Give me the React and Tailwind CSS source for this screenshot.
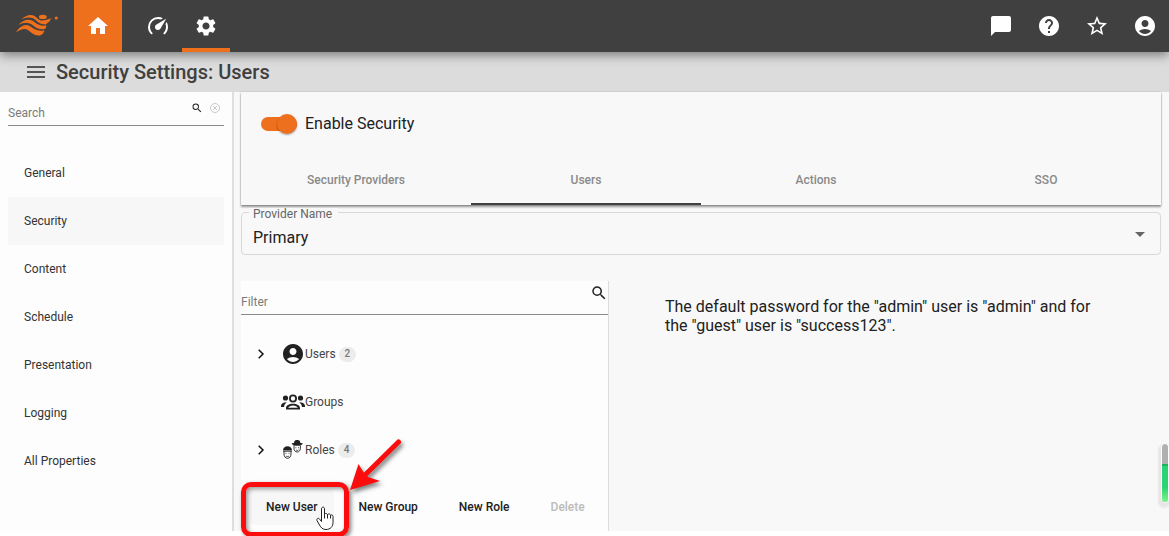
import React, { useState } from "react";
import {
  MdHome, MdSettings, MdChatBubble, MdHelp, MdStarBorder, MdAccountCircle,
  MdSearch, MdMenu, MdArrowDropDown,
} from "react-icons/md";

const sections = ["General", "Security", "Content", "Schedule", "Presentation", "Logging", "All Properties"];
const tabs = ["Security Providers", "Users", "Actions", "SSO"];

function Logo() {
  return (
    <svg viewBox="0 0 44 24" className="h-6 w-11" fill="#ee701d" aria-hidden="true">
      <path d="M5.500 5.500C9 1.500 15 0 18.500 2C21.500 4 22.500 6.500 26 6.500C29 6.500 32 5.500 35.500 4C34 6 33 6.500 34.500 6.800C32.500 8.200 31.500 8.500 30 10.500C26 10.500 22.500 9 19.500 6C16 2.800 11 3 5.500 5.500Z" />
      <path d="M2.500 11C6 6.500 12 4.500 16 6.500C20 8.500 22 12.500 30.500 11.500C30.200 13 30 14 29 15C24 16 20 14 17 11.500C13 8 8 8 2.500 11Z" />
      <path d="M0 18.500C3.500 12.500 9 9.500 13.500 12C18 14.500 20.500 17.500 28.500 16.500C27.500 19 26.500 21.500 22.500 21.500C18 21.500 15.500 18.500 12.500 16.500C9 14 5 15 0 18.500Z" />
      <ellipse cx="26.800" cy="2.900" rx="3.900" ry="2.200" />
      <circle cx="40.300" cy="4" r="1.600" />
    </svg>
  );
}

function Gauge() {
  return (
    <svg viewBox="0 0 24 24" className="size-6" fill="currentColor" aria-hidden="true">
      <path d="M12 16a3 3 0 0 1-3-3c0-1.120.610-2.100 1.500-2.610l9.710-5.620-5.530 9.580c-.500.980-1.510 1.650-2.680 1.650M12 3c1.810 0 3.500.500 4.970 1.320l-2.100 1.210C14 5.190 13 5 12 5a8 8 0 0 0-8 8c0 2.210.890 4.210 2.350 5.650.390.390.390 1.020 0 1.410-.390.390-1.030.390-1.420.010C3.120 18.260 2 15.760 2 13A10 10 0 0 1 12 3m10 10c0 2.760-1.120 5.260-2.930 7.070-.390.380-1.020.380-1.410-.010-.390-.390-.390-1.020 0-1.410C19.110 17.200 20 15.210 20 13c0-1-.190-2-.540-2.900L20.670 8C21.500 9.500 22 11.180 22 13Z" />
    </svg>
  );
}

function GroupsIcon() {
  return (
    <svg viewBox="0 0 24 16" className="h-4 w-6" fill="#212121" aria-hidden="true">
      <path fillRule="evenodd" d="M12 .500a4 4 0 1 1 0 8 4 4 0 0 1 0-8m0 1.800a2.200 2.200 0 1 0 0 4.400 2.200 2.200 0 0 0 0-4.400M5 15.500v-1.500c0-2.500 3-4.300 7-4.300s7 1.800 7 4.300v1.500Zm2.200-1.700h9.600c-.400-1.400-2.400-2.400-4.800-2.400s-4.400 1-4.800 2.400Z" />
      <circle cx="4.500" cy="4" r="2.600" />
      <circle cx="19.500" cy="4" r="2.600" />
      <path d="M0 13v-1.200C0 9.700 2.200 8.400 5.800 8.200 4.300 9.300 3.200 10.800 3 13ZM24 13v-1.200c0-2.100-2.200-3.400-5.800-3.600 1.500 1.100 2.600 2.600 2.800 4.800Z" />
    </svg>
  );
}

function RolesIcon() {
  return (
    <svg viewBox="0 0 22 22" className="size-[22px]" fill="none" stroke="#212121" aria-hidden="true">
      <path d="M2 12v3c0 2.500 1.500 4.300 3.500 4.300S9 17.500 9 15v-3" strokeWidth=".9" />
      <path d="M1 11.500C1 9 2.800 7.200 5.500 7.200S10 9 10 11.500Z" fill="#212121" stroke="none" />
      <path d="M1.200 12.300h8.600" strokeWidth=".8" />
      <path d="M3.500 14.300h1M6.500 14.300h1M4 17c1 .700 2 .700 3 0" strokeWidth=".8" />
      <path d="M12 6.500v2.500c0 2.500 1.300 4 3.200 4s3.200-1.500 3.200-4V6.500" strokeWidth=".9" />
      <path d="M12 4C12.200 1.800 13 .800 15.200 1c2.200-.200 3 .800 3.200 3l2.400.200C20.200 6 18 6.800 15.200 6.800S10.200 6 9.600 4.200Z" fill="#212121" stroke="none" />
      <path d="M13.400 8.700h1M16 8.700h1M14 11c.800.500 1.600.500 2.400 0" strokeWidth=".8" />
    </svg>
  );
}

function TreeRow({ label, icon, count }) {
  return (
    <li className="flex h-12 items-center pl-2 text-xs text-[#444]">
      {count ? (
        <button type="button" aria-label={"Expand " + label} className="flex w-8 pl-1">
          <svg viewBox="0 0 16 16" className="size-4" fill="none" stroke="#111" strokeWidth="1.5" aria-hidden="true"><path d="M5.700 3.700L10 8l-4.300 4.300" /></svg>
        </button>
      ) : (
        <span className="w-8" />
      )}
      <span className="flex w-6 shrink-0 justify-center text-[#212121]">{icon}</span>
      <span>{label}</span>
      {count && (
        <span className="ml-[3px] flex h-[15px] items-center rounded-full bg-[#ececec] px-1.5 text-[10px] font-medium text-[#777]">{count}</span>
      )}
    </li>
  );
}

export default function App() {
  const [enabled, setEnabled] = useState(true);
  return (
    <div className="min-h-screen bg-white font-['Roboto',sans-serif] text-[#212121]">
      <header className="relative z-10 flex h-13 items-stretch bg-[#404040] text-white shadow-[0_3px_10px_rgba(0,0,0,0.45)]">
        <a href="#home" aria-label="Portal" className="flex w-[74px] items-center pl-4"><Logo /></a>
        <nav className="flex flex-1">
          <a href="#start" aria-label="Home" className="flex w-12 items-center justify-center bg-[#ee701d]"><MdHome className="size-6" /></a>
          <a href="#monitor" aria-label="Monitoring" className="ml-3 flex w-12 items-center justify-center"><Gauge /></a>
          <a href="#settings" aria-label="Settings" className="flex w-12 items-center justify-center border-b-4 border-[#ee701d] pt-1"><MdSettings className="size-6" /></a>
        </nav>
        <div className="flex">
          <button type="button" aria-label="Messages" className="flex w-12 items-center justify-center"><MdChatBubble className="size-6" /></button>
          <button type="button" aria-label="Help" className="flex w-12 items-center justify-center"><MdHelp className="size-6" /></button>
          <button type="button" aria-label="Favorites" className="flex w-12 items-center justify-center"><MdStarBorder className="size-6" /></button>
          <button type="button" aria-label="Account" className="flex w-12 items-center justify-center"><MdAccountCircle className="size-6" /></button>
        </div>
      </header>

      <div className="flex h-10 items-center gap-2 bg-[#dcdcdc] pl-6">
        <button type="button" aria-label="Toggle menu" className="text-[#555]"><MdMenu className="size-6" /></button>
        <h1 className="text-xl font-medium text-[#404040]">Security Settings: Users</h1>
      </div>

      <div className="flex items-stretch bg-[#f8f8f8]">
        <aside className="w-[234px] shrink-0 border-r-2 border-[#dedede] bg-[#fdfdfd] pr-2 pl-2">
          <div className="flex h-[34px] items-center border-b border-[#8a8a8a]">
            <input aria-label="Search" placeholder="Search" className="min-w-0 flex-1 pt-2 text-xs outline-none placeholder:text-[#7b7b7b]" />
            <div className="mr-1 mb-0.5 flex items-center gap-[7px]">
              <MdSearch className="size-3 text-[#222]" />
              <button type="button" aria-label="Clear search">
                <svg viewBox="0 0 10 10" className="block size-2.5" fill="none" stroke="#bbb" strokeWidth=".8"><circle cx="5" cy="5" r="4.500" /><path d="M3.200 3.200l3.600 3.600M6.800 3.200L3.200 6.800" /></svg>
              </button>
            </div>
          </div>
          <nav className="mt-[23px] flex flex-col">
            {sections.map((s) => (
              <a key={s} href={"#" + s} className={"flex h-12 items-center px-4 text-xs text-[#333] " + (s === "Security" ? "bg-[#f7f7f7]" : "")}>{s}</a>
            ))}
          </nav>
        </aside>

        <main className="relative min-w-0 flex-1 px-2 pl-[7px]">
          <section className="flex h-[113px] flex-col justify-between shadow-[0_0_1px_rgba(0,0,0,0.35),0_2px_2px_rgba(0,0,0,0.4)]">
            <label className="flex items-center gap-2 pt-5 pl-5">
              <input type="checkbox" role="switch" checked={enabled} onChange={(e) => setEnabled(e.target.checked)} className="sr-only" />
              <span className={"flex h-3.5 w-9 items-center rounded-full bg-[#ee701d] " + (enabled ? "justify-end" : "justify-start")}>
                <span className="size-5 rounded-full bg-[#ee701d] shadow-[0_1px_2px_rgba(0,0,0,0.35)]" />
              </span>
              <span>Enable Security</span>
            </label>
            <div role="tablist" className="grid h-12 grid-cols-4">
              {tabs.map((t) => (
                <button key={t} type="button" role="tab" aria-selected={t === "Users"} className={"border-b-2 text-xs font-medium text-[#8a8a8a] " + (t === "Users" ? "border-[#404040]" : "border-transparent")}>{t}</button>
              ))}
            </div>
          </section>

          <div className="relative mt-[7px]">
            <label htmlFor="provider" className="absolute -top-1 left-2 bg-[#f8f8f8] pr-1.5 pl-1 text-xs leading-3 text-[#666]">Provider Name</label>
            <select id="provider" className="h-[43px] w-full appearance-none rounded border border-[#d8d8d8] bg-transparent pt-2 pl-[11px]">
              <option>Primary</option>
            </select>
            <MdArrowDropDown className="pointer-events-none absolute top-2.5 right-[9px] size-6 text-[#666]" />
          </div>

          <div className="mt-[26px] flex">
            <section className="flex h-[250px] w-2/5 shrink-0 flex-col border-r border-[#dcdcdc] bg-[#fdfdfd]">
              <div className="flex h-[34px] items-center border-b border-[#8a8a8a]">
                <input aria-label="Filter" placeholder="Filter" className="min-w-0 flex-1 pt-2 text-xs outline-none placeholder:text-[#7b7b7b]" />
                <MdSearch className="mb-2.5 size-[18px] text-[#222]" />
              </div>
              <ul className="mt-[15px]">
                <TreeRow label="Users" count={2} icon={<MdAccountCircle className="size-6" />} />
                <TreeRow label="Groups" icon={<GroupsIcon />} />
                <TreeRow label="Roles" count={4} icon={<RolesIcon />} />
              </ul>
              <div className="mt-[15px] flex gap-[9px] pl-[9px] text-xs font-medium">
                <div className="relative">
                  <button type="button" className="h-9 rounded bg-[#f7f7f7] px-4 whitespace-nowrap">New User</button>
                  <div className="pointer-events-none absolute -top-[7px] -right-[15px] -bottom-3 -left-[9px] rounded-[10px] border-[5px] border-[#fb0d0d] shadow-[2px_2px_4px_rgba(0,0,0,0.5),inset_2px_2px_4px_rgba(0,0,0,0.4)]" />
                  <svg viewBox="0 0 60 60" className="pointer-events-none absolute -top-13 left-24 size-15 drop-shadow-[2px_3px_2px_rgba(0,0,0,0.5)]" aria-hidden="true">
                    <path d="M52.500 5L18 39" stroke="#fb0d0d" strokeWidth="5" strokeLinecap="round" />
                    <path d="M4 53L12.500 27l5.500 9 4 4 12 4Z" fill="#fb0d0d" />
                  </svg>
                  <svg viewBox="0 0 18 24" className="pointer-events-none absolute top-[17px] left-[66px] h-6 w-[18px]" fill="#fff" stroke="#222" strokeLinejoin="round" aria-hidden="true">
                    <path d="M5.500 15.500V3C5.500.500 8.500.500 8.500 3v5.500c0-1.500 3-1.500 3 .500 0-1.500 3-1.500 3 .500 0-1 2.500-1 2.500 1v6c0 4-2.500 7-7 7-3.500 0-5-1.800-6.500-4.500L1 14.500C.300 12.500 2.500 11.500 3.500 13Z" />
                    <path d="M8.500 8.500v4M11.500 9v3.500M14.500 9.500v3" />
                  </svg>
                </div>
                <button type="button" className="px-4 whitespace-nowrap">New Group</button>
                <button type="button" className="px-4 whitespace-nowrap">New Role</button>
                <button type="button" disabled className="px-4 text-[#bbb]">Delete</button>
              </div>
            </section>
            <p className="mt-4 ml-14 max-w-[440px] leading-[19px]">
              The default password for the "admin" user is "admin" and for the "guest" user is "success123".
            </p>
          </div>

          <div className="absolute right-0 bottom-7 h-[60px] w-2 overflow-hidden rounded-full border border-white bg-[#b0b0b0] shadow-[-1px_3px_2px_2px_rgba(0,0,0,0.07)]" aria-hidden="true">
            <div className="mt-5 h-[38px] border-t-2 border-[#21b05c] bg-linear-to-b from-[#2bd373] from-60% to-[#7cf58a]" />
          </div>
        </main>
      </div>
    </div>
  );
}
